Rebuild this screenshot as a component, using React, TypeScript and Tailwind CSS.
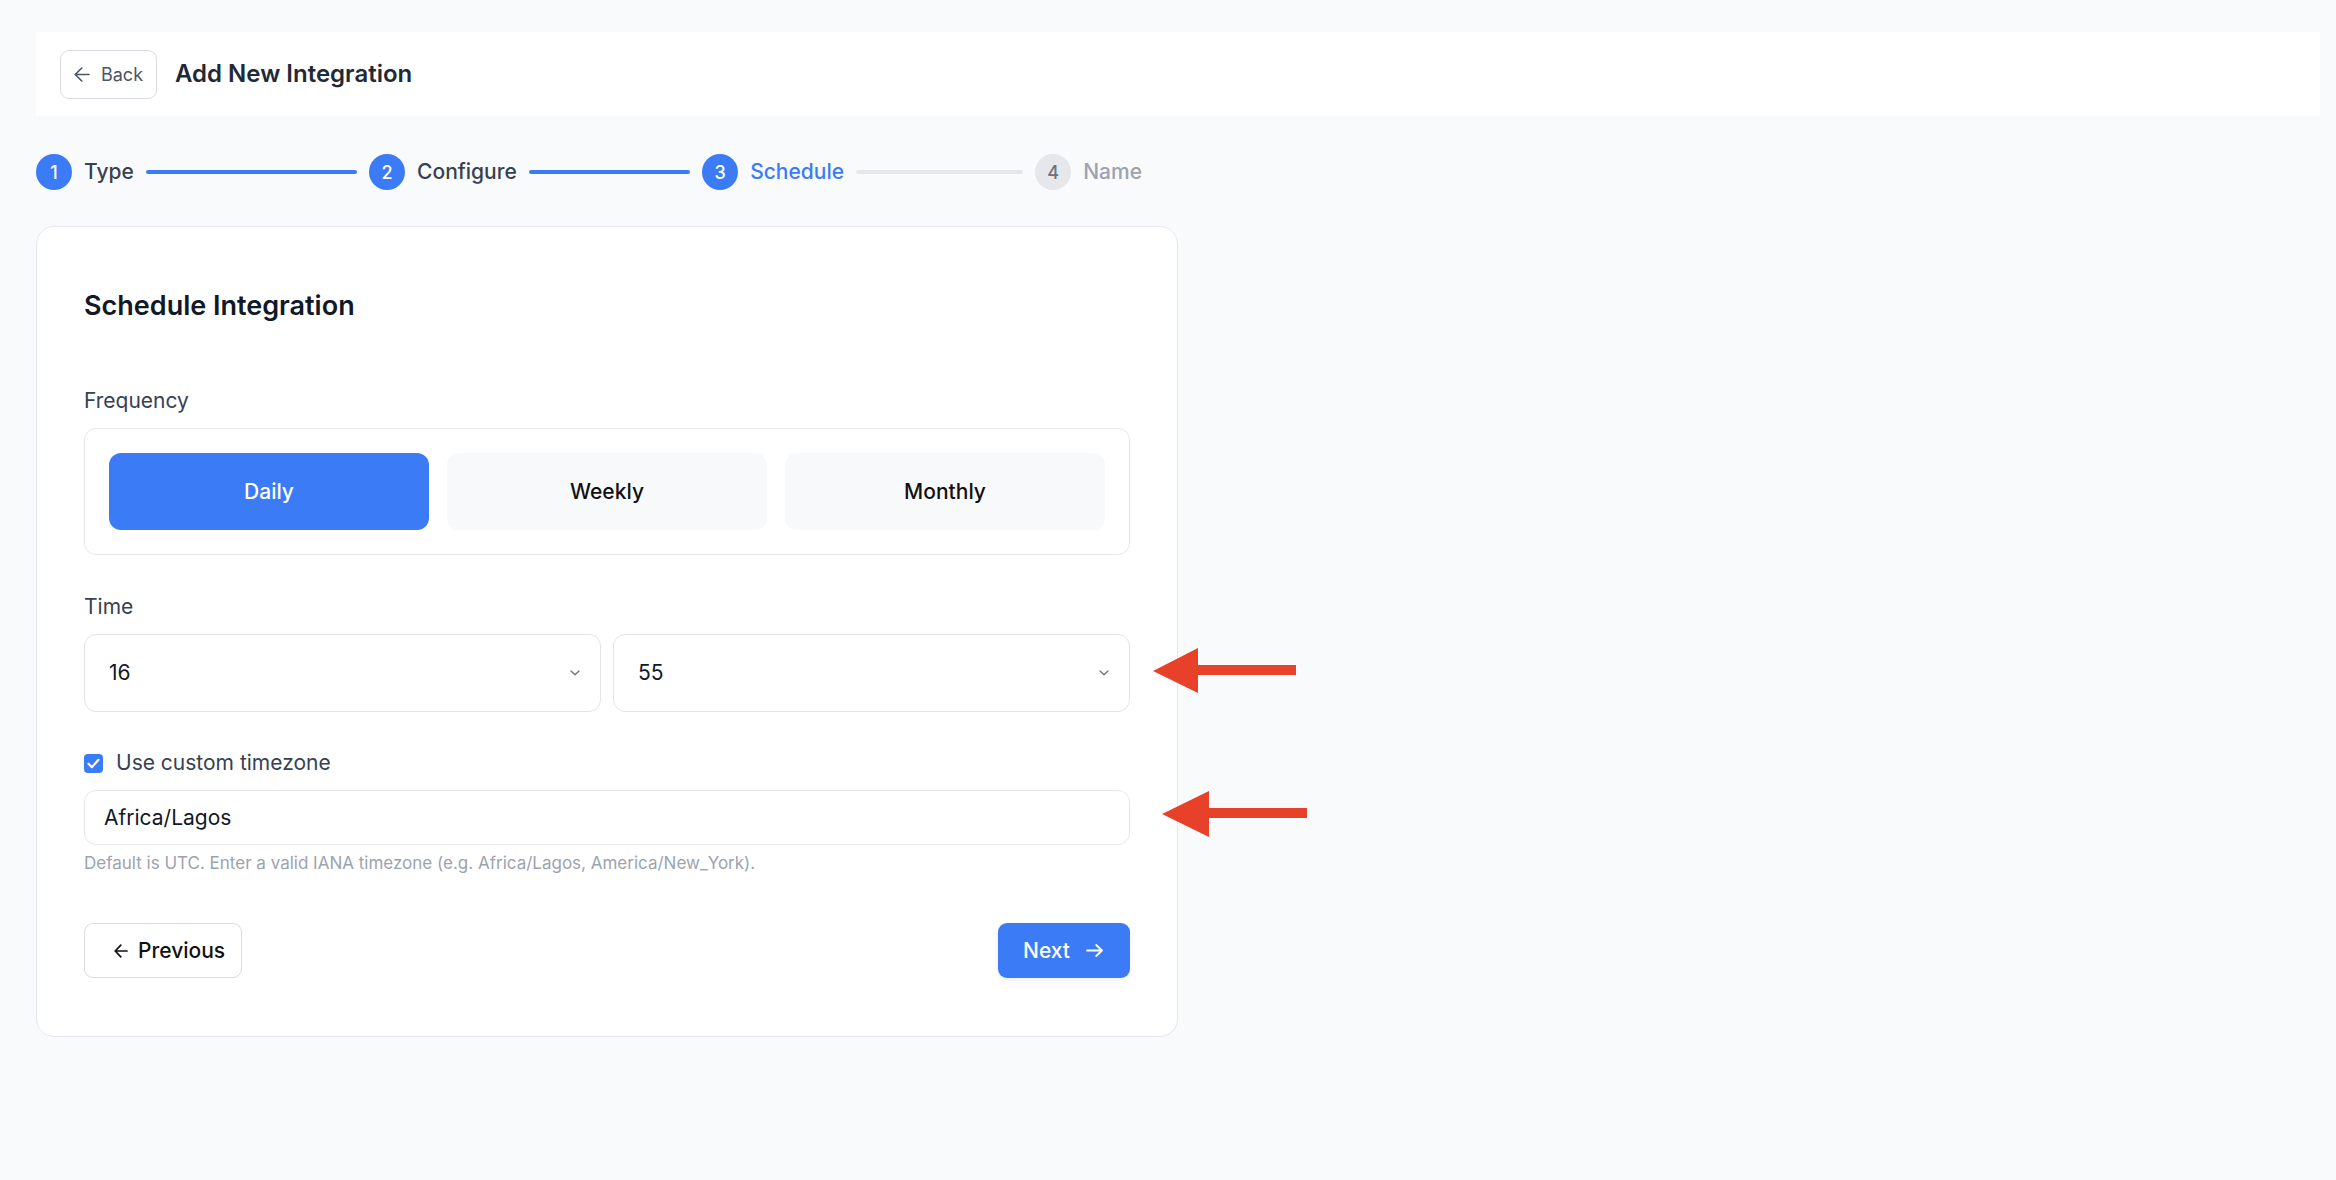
import React from 'react';

const BLUE = 'bg-[#3b7cf6]';

function Chevron() {
  return (
    <svg width="10" height="6" viewBox="0 0 10 6" fill="none">
      <polyline points="1,1 5,4.8 9,1" stroke="#6b7280" strokeWidth="1.3" strokeLinecap="round" strokeLinejoin="round" />
    </svg>
  );
}

function Select({ value }: { value: string }) {
  return (
    <div className="flex h-[78px] flex-1 items-center justify-between rounded-[12px] border border-[#e1e4e8] bg-white pl-[24px] pr-[20px]">
      <span className="text-[21px] text-[#111827]">{value}</span>
      <Chevron />
    </div>
  );
}

type Step = { n: number; label: string; state: 'done' | 'current' | 'todo' };

const steps: Step[] = [
  { n: 1, label: 'Type', state: 'done' },
  { n: 2, label: 'Configure', state: 'done' },
  { n: 3, label: 'Schedule', state: 'current' },
  { n: 4, label: 'Name', state: 'todo' },
];

function Stepper() {
  return (
    <div className="mt-[38px] mb-[36px] flex w-[1106px] items-center">
      {steps.map((s, i) => {
        const last = i === steps.length - 1;
        const circle =
          s.state === 'todo'
            ? 'bg-[#e5e7eb] text-[#6b7280]'
            : 'bg-[#3b7cf6] text-white';
        const label =
          s.state === 'done'
            ? 'text-[#374151]'
            : s.state === 'current'
            ? 'text-[#3b7cf6]'
            : 'text-[#9ca3af]';
        const line = s.state === 'done' ? 'bg-[#3b7cf6]' : 'bg-[#e5e7eb]';
        return (
          <div key={s.n} className={last ? 'flex items-center' : 'flex flex-1 items-center'}>
            <div className={`flex h-[36px] w-[36px] shrink-0 items-center justify-center rounded-full text-[18px] font-medium ${circle}`}>
              {s.n}
            </div>
            <span className={`ml-[12px] text-[21px] font-medium leading-[30px] ${label}`}>{s.label}</span>
            {!last && <div className={`mx-[12px] h-[4px] flex-1 rounded-full ${line}`} />}
          </div>
        );
      })}
    </div>
  );
}

export default function App() {
  return (
    <div className="relative min-h-screen bg-[#f9fafb] pl-[36px] pr-[16px] pt-[32px] pb-[40px] font-['Inter',sans-serif]">
      <header className="flex h-[84px] items-center gap-[18px] bg-white px-[24px]">
        <button className="flex h-[49px] w-[97px] items-center justify-center gap-[11px] rounded-[9px] border border-[#d9dce1] bg-white text-[18px] text-[#4b5563]">
          <svg width="16" height="15" viewBox="0 0 16 15" fill="none">
            <path d="M15 7.5H1.2 M7.8 1L1.2 7.5 7.8 14" stroke="#4b5563" strokeWidth="1.6" strokeLinecap="round" strokeLinejoin="round" />
          </svg>
          <span>Back</span>
        </button>
        <h1 className="text-[24px] font-semibold text-[#1f2937]">Add New Integration</h1>
      </header>

      <Stepper />

      <div className="w-[1142px] rounded-[18px] border border-[#e5e7eb] bg-white px-[47px] pt-[58px] pb-[58px]">
        <h2 className="text-[27px] font-semibold leading-[42px] text-[#111827]">Schedule Integration</h2>

        <div className="mt-[59px] text-[21px] leading-[30px] text-[#374151]">Frequency</div>
        <div className="mt-[12px] flex gap-[18px] rounded-[12px] border border-[#e5e7eb] p-[24px]">
          <button className={`h-[77px] flex-1 rounded-[12px] ${BLUE} text-[21px] font-medium text-white`}>Daily</button>
          <button className="h-[77px] flex-1 rounded-[12px] bg-[#f8f9fb] text-[21px] font-medium text-[#111111]">Weekly</button>
          <button className="h-[77px] flex-1 rounded-[12px] bg-[#f8f9fb] text-[21px] font-medium text-[#111111]">Monthly</button>
        </div>

        <div className="mt-[37px] text-[21px] leading-[30px] text-[#374151]">Time</div>
        <div className="mt-[12px] flex gap-[12px]">
          <Select value="16" />
          <Select value="55" />
        </div>

        <div className="mt-[36px] flex h-[30px] items-center gap-[13px]">
          <div className={`flex h-[19px] w-[19px] items-center justify-center rounded-[4px] ${BLUE}`}>
            <svg width="13" height="11" viewBox="0 0 13 11" fill="none">
              <path d="M1.5 5.8L4.8 9.2 11.5 1.8" stroke="white" strokeWidth="2.2" strokeLinecap="round" strokeLinejoin="round" />
            </svg>
          </div>
          <span className="text-[21px] leading-[30px] text-[#374151]">Use custom timezone</span>
        </div>

        <div className="mt-[12px] flex h-[55px] items-center rounded-[12px] border border-[#e5e7eb] bg-white px-[19px] text-[21px] text-[#111827]">
          Africa/Lagos
        </div>
        <p className="mt-[6px] text-[17px] leading-[24px] text-[#9ca3af]">
          Default is UTC. Enter a valid IANA timezone (e.g. Africa/Lagos, America/New_York).
        </p>

        <div className="mt-[48px] flex items-center justify-between">
          <button className="flex h-[55px] w-[158px] items-center gap-[10px] rounded-[9px] border border-[#d9dce1] bg-white pl-[29px] text-[21px] font-medium text-[#111111]">
            <svg width="14" height="14" viewBox="0 0 14 14" fill="none">
              <path d="M13 7H1.2 M6.8 1.2L1.2 7l5.6 5.8" stroke="#111111" strokeWidth="1.7" strokeLinecap="round" strokeLinejoin="round" />
            </svg>
            <span>Previous</span>
          </button>
          <button className={`flex h-[55px] w-[132px] items-center gap-[16px] rounded-[9px] ${BLUE} pl-[25px] text-[21px] font-medium text-white shadow-[0_2px_4px_rgba(0,0,0,0.08)]`}>
            <span>Next</span>
            <svg width="17" height="13" viewBox="0 0 17 13" fill="none">
              <path d="M1 6.5H16 M10.2 1L16 6.5 10.2 12" stroke="white" strokeWidth="1.8" strokeLinecap="round" strokeLinejoin="round" />
            </svg>
          </button>
        </div>
      </div>

      <svg className="absolute left-[1150px] top-[645px]" width="160" height="195" viewBox="0 0 160 195">
        <polygon points="3,26 48,3 48,20 146,20 146,30 48,30 48,48" fill="#e8412a" />
        <polygon points="12,169 59,146 59,163 157,163 157,173 59,173 59,192" fill="#e8412a" />
      </svg>
    </div>
  );
}
